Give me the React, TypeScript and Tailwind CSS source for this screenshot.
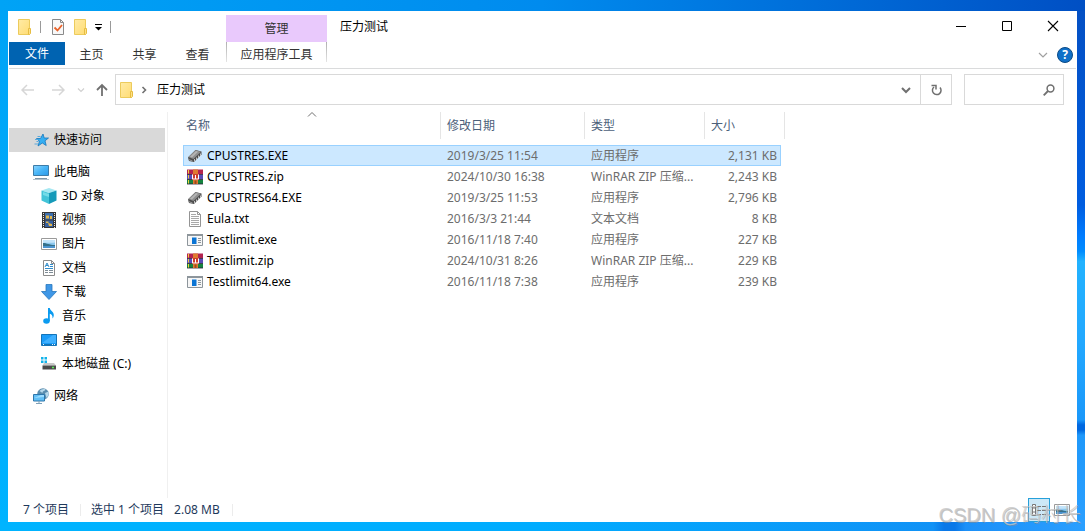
import React, { useState } from 'react';

// ── Data ──────────────────────────────────────────────────────────────────────

type FileKind = 'chip' | 'rar' | 'text' | 'app';

interface FileEntry {
  name: string;
  kind: FileKind;
  date: string;
  type: string;
  size: string;
}

const FILES: FileEntry[] = [
  { name: 'CPUSTRES.EXE',   kind: 'chip', date: '2019/3/25 11:54',  type: '应用程序',           size: '2,131 KB' },
  { name: 'CPUSTRES.zip',   kind: 'rar',  date: '2024/10/30 16:38', type: 'WinRAR ZIP 压缩...', size: '2,243 KB' },
  { name: 'CPUSTRES64.EXE', kind: 'chip', date: '2019/3/25 11:53',  type: '应用程序',           size: '2,796 KB' },
  { name: 'Eula.txt',       kind: 'text', date: '2016/3/3 21:44',   type: '文本文档',           size: '8 KB' },
  { name: 'Testlimit.exe',  kind: 'app',  date: '2016/11/18 7:40',  type: '应用程序',           size: '227 KB' },
  { name: 'Testlimit.zip',  kind: 'rar',  date: '2024/10/31 8:26',  type: 'WinRAR ZIP 压缩...', size: '229 KB' },
  { name: 'Testlimit64.exe', kind: 'app', date: '2016/11/18 7:38',  type: '应用程序',           size: '239 KB' },
];

// ── Icons ─────────────────────────────────────────────────────────────────────

function Svg({ children, size = 16 }: { children: React.ReactNode; size?: number }) {
  return (
    <svg width={size} height={size} viewBox={`0 0 ${size} ${size}`} fill="none" className="block shrink-0" aria-hidden="true">
      {children}
    </svg>
  );
}

function FolderIcon() {
  return (
    <Svg>
      <defs>
        <linearGradient id="folder" x1="0" y1="0" x2="1" y2="1">
          <stop offset="0" stopColor="#ffeba6" />
          <stop offset="1" stopColor="#ffdc74" />
        </linearGradient>
      </defs>
      <path d="M1.5.5h11v15h-11z" fill="url(#folder)" stroke="#eccb5c" />
      <path d="M11.5 9.5h2v5l-1 1h-1z" fill="#ffe187" stroke="#e6bd42" />
    </Svg>
  );
}

function CheckDocIcon() {
  return (
    <Svg>
      <path d="M2.5.5h8l3 3v12h-11z" fill="#f8f8f8" stroke="#8a8a8a" />
      <path d="M10.5.5v3h3" stroke="#8a8a8a" />
      <path d="M4.5 8.5l3 3 4.5-5.5" stroke="#e8622a" strokeWidth="1.8" />
    </Svg>
  );
}

function StarIcon() {
  return (
    <Svg>
      <path d="M10 2l1.200 4h4.300l-3.500 2.800 1.200 4.700L9.300 11l-4.300 3 1.500-4.700L3.500 6.500h4z" fill="#35aef2" stroke="#1677bd" strokeWidth=".8" />
      <path d="M4.500 4.500h3M2 7.500h3M3.500 9.500h2M1.500 12h3.500" stroke="#5aa9dc" />
    </Svg>
  );
}

function PcIcon() {
  return (
    <Svg>
      <defs>
        <linearGradient id="screen" x1="0" y1="0" x2="1" y2="1">
          <stop offset="0" stopColor="#8bd5ff" />
          <stop offset=".5" stopColor="#48b5f7" />
          <stop offset="1" stopColor="#2a98e8" />
        </linearGradient>
      </defs>
      <path d="M.5 1.500h15v10H.5z" fill="url(#screen)" stroke="#3d7ca8" />
      <path d="M2 14.500h12" stroke="#7d96a8" />
      <path d="M0 15.500h16" stroke="#b4c2cc" />
    </Svg>
  );
}

function CubeIcon() {
  return (
    <Svg>
      <path d="M8 0l7.500 2.500L8 5 .5 2.500z" fill="#a5e8f2" />
      <path d="M.5 2.500L8 5v11L.5 12.500z" fill="#43c4d8" />
      <path d="M8 5l7.500-2.500v10L8 16z" fill="#159ab9" />
      <path d="M2 4l6 2v3L2 7z" fill="#74dce8" />
    </Svg>
  );
}

function FilmIcon() {
  return (
    <Svg>
      <path d="M1 0h14v16H1z" fill="#363636" />
      <path d="M4 1h8v6.500H4z" fill="#3c6fae" />
      <path d="M4 8.500h8V15H4z" fill="#355f9f" />
      <path d="M5 3.500h3v3H5zM9 4h2v3H9zM5 9.500h2.500v1.500H5zM7 11l4 1v2H8z" fill="#e3b64a" />
      <path d="M2.500 1v15M13.500 1v15" stroke="#e8e8e8" strokeDasharray="1 1" />
    </Svg>
  );
}

function PictureIcon() {
  return (
    <Svg>
      <path d="M.5 2.500h15v11H.5z" fill="#fff" stroke="#9a9a9a" />
      <path d="M2 4h12v8H2z" fill="#8cc8ee" />
      <path d="M2 4h12v2.500c-4 1-8-.5-12 .5z" fill="#c3e4fa" />
      <path d="M2 7c4 0 6 2 12 2v1.500H2z" fill="#35708a" />
      <path d="M2 10h12v2H2z" fill="#4b93cf" />
    </Svg>
  );
}

function DocumentIcon() {
  return (
    <Svg>
      <path d="M2.500.5h8l3 3v12h-11z" fill="#fff" stroke="#8b8b8b" />
      <path d="M10.500.5v3h3" stroke="#8b8b8b" />
      <path d="M9 4.500h3M9 6.500h3M4 8.500h8" stroke="#2f8ccb" />
      <path d="M4 7l2-4 2 4M5 5.500h2" stroke="#2f8ccb" />
      <path d="M4 10.500h3M8 10.500h4M4 12.500h3M8 12.500h4" stroke="#7e8c96" />
    </Svg>
  );
}

function DownloadIcon() {
  return (
    <Svg>
      <path d="M5 .5h6v7h4.500L8 15.500.5 7.500H5z" fill="#3f97e6" stroke="#2877bd" strokeWidth=".8" />
    </Svg>
  );
}

function MusicIcon() {
  return (
    <Svg>
      <ellipse cx="5.500" cy="13" rx="3.300" ry="2.800" fill="#0b9bf0" />
      <path d="M7 0h1.800c.3 3 4 3.500 4 7 0 1.500-.5 2.500-1.300 3.500.3-3-.9-4.300-2.700-4.700V13H7z" fill="#0b9bf0" />
    </Svg>
  );
}

function DesktopIcon() {
  return (
    <Svg>
      <path d="M.5 2.500h15v11H.5z" fill="#1b9cf8" stroke="#1474b8" />
      <path d="M1 11L12 3h3v8z" fill="#3fb0ff" />
      <path d="M1 12.500h14" stroke="#1474b8" />
      <path d="M2 12.500h1M11 12.500h1M13 12.500h1" stroke="#e6f5ff" />
    </Svg>
  );
}

function DiskIcon() {
  return (
    <Svg>
      <path d="M0 1h2.500v2.500H0zM3.500 1H6v2.500H3.500zM0 4.500h2.500V7H0zM3.500 4.500H6V7H3.500z" fill="#12b3ea" />
      <path d="M3 7h10l2 2.500H1.500z" fill="#c7c7c7" />
      <path d="M1.500 9.500H15v4H1.500z" fill="#4a4a4a" />
      <path d="M11 11.500h2" stroke="#5aea55" strokeWidth="1.500" />
    </Svg>
  );
}

function NetworkIcon() {
  return (
    <Svg>
      <circle cx="10" cy="6" r="5.800" fill="#5a8dae" />
      <path d="M6.500 3c1.500-2 4-2.500 6-1.800-.5 2.300-3 1.300-3 3.800zM12 5l3.500-1.500c.6 2.500 0 4.500-2 6.500z" fill="#b7d8ea" />
      <path d="M.5 6.500h11v6.500H.5z" fill="#62bff5" stroke="#2f77ab" />
      <path d="M1 10l7-3h3v2z" fill="#9cdcff" />
      <path d="M6 13v2M3 15.500h6" stroke="#7fa1b8" />
    </Svg>
  );
}

function ChipIcon() {
  return (
    <Svg>
      <path d="M1 9.500l7.500-7.500 6 1.500v3L7 14l-5-1z" fill="#4d4d4d" />
      <path d="M1.200 9L8.500 2.200l5.500 1.500L6.500 11z" fill="#8f8f8f" />
      <path d="M3 8.700l6-5.600 2 .6-6 5.700z" fill="#b5b5b5" />
      <path d="M7.500 11v2.500M9.500 9.500V12M11.500 7.500V10M13.500 5.500V8" stroke="#c4c4c4" />
      <path d="M1.500 11.500l4 1.500" stroke="#9b9b9b" />
    </Svg>
  );
}

function RarIcon() {
  return (
    <Svg>
      <path d="M0 .5h16V5H0z" fill="#b3234f" />
      <path d="M0 5.500h16V10H0z" fill="#5a4bb8" />
      <path d="M0 10.500h16V15H0z" fill="#15843f" />
      <path d="M0 5.500h16M0 10.500h16M0 15h16" stroke="#2a2037" strokeWidth=".8" />
      <path d="M1.500 1v3.500M1.500 6v3.500M1.500 11v3.500" stroke="#f0cf3f" />
      <path d="M6 .5h5v14.500H6z" fill="#e07a30" />
      <path d="M5 5h7v6H5z" fill="#cc3d2b" />
      <path d="M5.500 5.500v4.500h6V5.500M8.500 6v4" stroke="#fff" />
      <path d="M7.500 11.500h2V15h-2z" fill="#9c4a1e" />
    </Svg>
  );
}

function TextFileIcon() {
  return (
    <Svg>
      <path d="M2.500.5h8l3 3v12h-11z" fill="#fdfdfd" stroke="#949494" />
      <path d="M10.500.5v3h3" stroke="#949494" />
      <path d="M4 3.500h5M4 5.500h8M4 7.500h8M4 9.500h8M4 11.500h8M4 13.500h8" stroke="#a8a8a8" />
    </Svg>
  );
}

function AppIcon() {
  return (
    <Svg>
      <path d="M.5 2.500h15v11H.5z" fill="#f6f6f6" stroke="#8d959b" />
      <path d="M0 3h16" stroke="#8d959b" strokeWidth="2" />
      <path d="M5 5.500h4.500v6.500H5z" fill="#0a74d4" />
      <path d="M11 6.500h3M11 8.500h3M11 10.500h3" stroke="#8d959b" />
    </Svg>
  );
}

function Chevron({ d, color, width = 1 }: { d: string; color: string; width?: number }) {
  return (
    <Svg size={10}>
      <path d={d} stroke={color} strokeWidth={width} />
    </Svg>
  );
}

const FILE_ICONS: Record<FileKind, React.ElementType> = {
  chip: ChipIcon,
  rar:  RarIcon,
  text: TextFileIcon,
  app:  AppIcon,
};

const PC_ITEMS: { label: string; icon: React.ElementType }[] = [
  { label: '3D 对象',       icon: CubeIcon },
  { label: '视频',          icon: FilmIcon },
  { label: '图片',          icon: PictureIcon },
  { label: '文档',          icon: DocumentIcon },
  { label: '下载',          icon: DownloadIcon },
  { label: '音乐',          icon: MusicIcon },
  { label: '桌面',          icon: DesktopIcon },
  { label: '本地磁盘 (C:)', icon: DiskIcon },
];

// ── Window chrome ─────────────────────────────────────────────────────────────

function TitleBar() {
  return (
    <div className="flex h-[31px] shrink-0 items-start">
      <div className="flex h-8 w-[217px] shrink-0 items-center pl-2">
        <FolderIcon />
        <span className="ml-[7px] h-3 w-px bg-[#9a9a9a]" />
        <button type="button" aria-label="属性" className="ml-[9px]"><CheckDocIcon /></button>
        <button type="button" aria-label="新建文件夹" className="ml-[7px]"><FolderIcon /></button>
        <button type="button" aria-label="自定义快速访问工具栏" className="ml-[5px]">
          <Svg size={10}>
            <path d="M1 2.500h7" stroke="#000" />
            <path d="M1 5h7L4.500 8.500z" fill="#000" />
          </Svg>
        </button>
        <span className="ml-[6px] h-3 w-px bg-[#9a9a9a]" />
      </div>
      <div className="mt-1 flex h-[27px] w-[101px] shrink-0 items-center justify-center bg-[#e9c9fc] text-[#333]">管理</div>
      <h1 className="flex h-8 items-center pl-[13px] text-black">压力测试</h1>
      <div className="ml-auto flex">
        <button type="button" aria-label="最小化" className="flex h-[30px] w-[46px] items-center justify-center">
          <Svg size={12}><path d="M1 6.500h10" stroke="#000" /></Svg>
        </button>
        <button type="button" aria-label="最大化" className="flex h-[30px] w-[46px] items-center justify-center">
          <Svg size={12}><path d="M1.500 1.500h9v9h-9z" stroke="#000" /></Svg>
        </button>
        <button type="button" aria-label="关闭" className="flex h-[30px] w-[46px] items-center justify-center">
          <Svg size={12}><path d="M1 1l10 10M11 1L1 11" stroke="#000" strokeWidth="1.100" /></Svg>
        </button>
      </div>
    </div>
  );
}

function Ribbon() {
  return (
    <div className="flex h-[27px] shrink-0 items-start border-b border-[#dadbdc] text-[#333]">
      <button type="button" className="h-[23px] w-14 bg-[#0063b1] text-white">文件</button>
      {['主页', '共享', '查看'].map(tab => (
        <button key={tab} type="button" className="h-[25px] w-[53px]">{tab}</button>
      ))}
      <div className="ml-0.5 flex w-[101px] justify-between">
        <span className="h-5 w-px bg-linear-to-b from-[#b0b0b0] to-[#e4e4e4]" />
        <button type="button" className="h-[25px]">应用程序工具</button>
        <span className="h-5 w-px bg-linear-to-b from-[#b0b0b0] to-[#e4e4e4]" />
      </div>
      <div className="ml-auto flex items-center gap-[9px] pt-[5px] pr-[3px]">
        <button type="button" aria-label="展开功能区">
          <Chevron d="M1 3l4 4 4-4" color="#a0a0a0" width={1.2} />
        </button>
        <button
          type="button"
          aria-label="帮助"
          className="flex size-4 items-center justify-center rounded-full border border-[#0b4a86] bg-[#1070c8] text-[12px] leading-none font-bold text-white"
        >
          ?
        </button>
      </div>
    </div>
  );
}

function AddressBar() {
  return (
    <div className="flex shrink-0 items-center pt-[5px] pr-3 pl-3">
      <button type="button" aria-label="后退">
        <Svg size={14}><path d="M1 7h12M6 2L1 7l5 5" stroke="#d6d6d6" strokeWidth="1.500" /></Svg>
      </button>
      <button type="button" aria-label="前进" className="ml-4">
        <Svg size={14}><path d="M1 7h12M8 2l5 5-5 5" stroke="#d6d6d6" strokeWidth="1.500" /></Svg>
      </button>
      <button type="button" aria-label="最近浏览的位置" className="ml-[11px]">
        <Chevron d="M2 3.500l3 3 3-3" color="#d0d0d0" width={1.2} />
      </button>
      <button type="button" aria-label="上移" className="ml-[9px]">
        <Svg size={14}><path d="M7 13V2M2 7l5-5 5 5" stroke="#707070" strokeWidth="1.800" /></Svg>
      </button>
      <div className="ml-[6px] flex h-[31px] min-w-0 grow items-center border border-[#d9d9d9] pl-[3px]">
        <FolderIcon />
        <span className="ml-1"><Chevron d="M3.500 2l3 3-3 3" color="#707070" width={1.6} /></span>
        <button type="button" className="ml-2 text-black">压力测试</button>
        <button type="button" aria-label="以前的位置" className="ml-auto mr-[9px]">
          <Chevron d="M1 3l4 4 4-4" color="#707070" width={2} />
        </button>
        <button type="button" aria-label="刷新" className="flex h-full w-[31px] shrink-0 items-center justify-center border-l border-[#d9d9d9]">
          <Svg size={12}>
            <path d="M10 3.500a4.300 4.300 0 1 1-6-.5" stroke="#707070" strokeWidth="1.500" />
            <path d="M1.500 1.500h4.500v4" stroke="#707070" strokeWidth="1.500" />
          </Svg>
        </button>
      </div>
      <div className="ml-3 flex h-[31px] w-[100px] shrink-0 items-center border border-[#d9d9d9] pr-2">
        <input type="search" aria-label="搜索" className="min-w-0 grow px-2 outline-none" />
        <Svg size={12}>
          <circle cx="7.500" cy="4.500" r="3.400" stroke="#707070" strokeWidth="1.500" />
          <path d="M5 7l-4.300 4.300" stroke="#707070" strokeWidth="1.800" />
        </Svg>
      </div>
    </div>
  );
}

// ── Panes ─────────────────────────────────────────────────────────────────────

function NavPane() {
  return (
    <nav className="mt-[7px] w-[159px] shrink-0 border-r border-[#f0f0f0] pt-4 pr-0.5 text-black">
      <button type="button" className="flex h-6 w-full items-center gap-[5px] bg-[#d9d9d9] pl-6">
        <StarIcon />快速访问
      </button>
      <button type="button" className="mt-2 flex h-6 w-full items-center gap-[5px] pl-6">
        <PcIcon />此电脑
      </button>
      {PC_ITEMS.map(({ label, icon: Icon }) => (
        <button key={label} type="button" className="flex h-6 w-full items-center gap-[5px] pl-8">
          <Icon />{label}
        </button>
      ))}
      <button type="button" className="mt-2 flex h-6 w-full items-center gap-[5px] pl-6">
        <NetworkIcon />网络
      </button>
    </nav>
  );
}

function FileTable() {
  const [selected, setSelected] = useState('CPUSTRES.EXE');

  return (
    <table className="mt-[7px] w-[602px] table-fixed border-separate border-spacing-0 self-start text-left whitespace-nowrap text-[#6d6d6d]">
      <colgroup>
        <col className="w-[258px]" />
        <col className="w-36" />
        <col className="w-[120px]" />
        <col className="w-[76px]" />
        <col className="w-1" />
      </colgroup>
      <thead className="text-[#4c607a]">
        <tr className="h-[27px]">
          <th className="relative border-r border-[#e5e5e5] p-0 pl-[3px] font-normal" aria-sort="ascending">
            名称
            <span className="absolute -top-0.5 left-1/2 -translate-x-1/2">
              <Chevron d="M1 6.500l4-4 4 4" color="#707070" />
            </span>
          </th>
          <th className="border-r border-[#e5e5e5] p-0 pl-[6px] font-normal">修改日期</th>
          <th className="border-r border-[#e5e5e5] p-0 pl-[6px] font-normal">类型</th>
          <th colSpan={2} className="border-r border-[#e5e5e5] p-0 pl-[6px] font-normal">大小</th>
        </tr>
      </thead>
      <tbody>
        <tr className="h-[6px]"><td colSpan={5} className="p-0" /></tr>
        {FILES.map(file => {
          const Icon = FILE_ICONS[file.kind];
          const active = file.name === selected;
          const cell = active ? 'h-[21px] p-0 border-y border-[#99d1ff] bg-[#cce8ff]' : 'h-[21px] p-0';
          return (
            <tr key={file.name} onClick={() => setSelected(file.name)} aria-selected={active}>
              <td className={`${cell} ${active ? 'border-l pl-[3px]' : 'pl-1'}`}>
                <span className="flex items-center gap-1 text-black"><Icon />{file.name}</span>
              </td>
              <td className={`${cell} pl-[6px]`}>{file.date}</td>
              <td className={`${cell} pl-[6px]`}>{file.type}</td>
              <td className={`${cell} text-right ${active ? 'border-r pr-[3px]' : 'pr-1'}`}>{file.size}</td>
              <td className="p-0" />
            </tr>
          );
        })}
      </tbody>
    </table>
  );
}

function StatusBar() {
  return (
    <footer className="flex h-6 shrink-0 items-center pr-[6px] pl-[14px] text-[#1e395b]">
      <span>7 个项目</span>
      <span className="ml-[11px] h-3 w-px bg-[#ececec]" />
      <span className="ml-[10px]">选中 1 个项目</span>
      <span className="ml-[10px]">2.08 MB</span>
      <span className="ml-3 h-3 w-px bg-[#ececec]" />
      <button type="button" aria-label="详细信息" className="ml-auto flex h-6 w-[22px] items-center justify-center border border-[#26a0da] bg-[#cce8f7]">
        <Svg>
          <path d="M1.500 2.500h3v11h-3zM1.500 6h3M1.500 10h3" fill="#fff" stroke="#777" />
          <path d="M6 4.500h4M11 4.500h4M6 8.500h4M11 8.500h4M6 12.500h4M11 12.500h4" stroke="#777" />
        </Svg>
      </button>
      <button type="button" aria-label="大缩略图" className="ml-1"><PictureIcon /></button>
    </footer>
  );
}

export default function App() {
  return (
    <div className="relative flex h-screen flex-col overflow-hidden font-['Noto_Sans','Noto_Sans_CJK_SC',sans-serif] text-[12px] leading-4">
      <div className="h-[11px] shrink-0 bg-linear-to-r from-[#00a3f6] via-[#008bee] to-[#004fc4]" />
      <div className="flex min-h-0 grow">
        <div className="w-2 shrink-0 bg-linear-to-b from-[#00a3f6] to-[#00b3ff]" />
        <main className="flex min-w-0 grow flex-col bg-white px-px">
          <TitleBar />
          <Ribbon />
          <AddressBar />
          <div className="flex min-h-0 grow">
            <NavPane />
            <section className="min-w-0 grow pl-[15px]">
              <FileTable />
            </section>
          </div>
          <StatusBar />
        </main>
        <div className="w-2 shrink-0 bg-[linear-gradient(180deg,#0450c4_0%,#005de0_38%,#007cff_44%,#008cff_47%,#22b2ff_49%,#22a8ff_65%,#1a98fa_80%,#0068e0_81%,#0068e0_82%,#1f98fa_83%,#2a9fff_100%)]" />
      </div>
      <div className="h-[9px] shrink-0 bg-[linear-gradient(90deg,#00b4ff_0%,#00acff_50%,#1192f6_86%,#0a78e8_87%,#0a78e8_88%,#1c90f8_89%,#2a9fff_100%)]" />
      <p className="pointer-events-none absolute right-1 bottom-0 font-['Liberation_Sans','Noto_Sans_CJK_SC',sans-serif] text-[20px] leading-8 font-light text-[#c4c4c4]/80 [text-shadow:1px_1px_0_#8a8a8a80]">
        CSDN @码村长
      </p>
    </div>
  );
}
